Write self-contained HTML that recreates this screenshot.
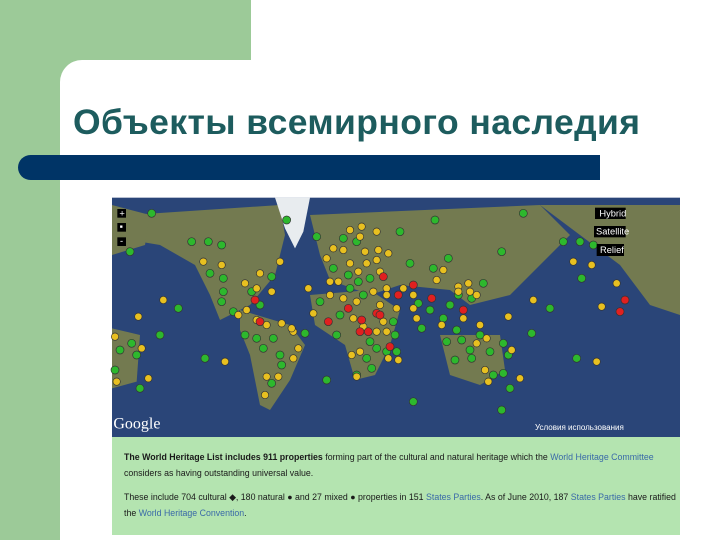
<!DOCTYPE html><html><head><meta charset="utf-8"><style>
body{margin:0;width:720px;height:540px;position:relative;overflow:hidden;background:#fff;font-family:"Liberation Sans",sans-serif}
.g1{position:absolute;left:0;top:0;width:251px;height:60px;background:#9cca98}
.g3{position:absolute;left:0;top:0;width:100px;height:100px;background:#9cca98}
.g2{position:absolute;left:0;top:0;width:60px;height:540px;background:#9cca98}
.w{position:absolute;left:60px;top:60px;width:700px;height:500px;background:#fff;border-top-left-radius:22px}
h1{position:absolute;left:73px;top:102px;margin:0;font-size:35.5px;font-weight:bold;color:#1d5c5e;white-space:nowrap;letter-spacing:0.4px}
.bar{position:absolute;left:18px;top:155px;width:582px;height:25px;background:#003466;border-radius:13px 0 0 13px}
.map{position:absolute;left:110px;top:195px}
.panel{position:absolute;left:112px;top:437px;width:568px;height:98px;background:#b4e4b0;font-size:8.8px;color:#1a1a1a;line-height:16px}
.panel p{margin:0;position:absolute;left:12px;width:552px}
.panel a{color:#3a6aa8}
</style></head><body>
<div class="g1"></div><div class="g3"></div><div class="g2"></div><div class="w"></div>
<h1>Объекты всемирного наследия</h1>
<div class="bar"></div>
<svg class="map" width="575" height="245" viewBox="0 0 1725 735">
<rect x="6" y="8" width="1704" height="718" fill="#2a4578"/>
<g fill="#737a50">
<polygon points="60,60 510,30 525,120 495,240 420,330 330,375 300,300 255,210 150,150 60,135"/>
<polygon points="390,345 540,390 585,450 540,555 480,645 450,630 420,480 390,405"/>
<polygon points="600,60 1290,30 1380,120 1290,210 1200,300 1080,330 1020,285 870,270 780,300 660,255 630,180"/>
<polygon points="600,300 780,285 870,345 840,450 795,540 735,555 705,450 615,390"/>
<polygon points="990,420 1170,420 1185,525 1110,570 1020,540"/>
<polygon points="1290,30 1710,30 1710,360 1620,330 1530,210 1410,120"/>
<polygon points="6,30 120,60 105,150 6,180"/>
<polygon points="6,400 90,420 80,560 6,580"/>
</g>
<polygon points="495,8 600,8 580,110 555,160 525,100" fill="#e8ecef"/>
<g stroke="#333" stroke-width="2">
<g fill="#2db82d">
<circle cx="125" cy="55" r="12"/><circle cx="530" cy="75" r="12"/><circle cx="620" cy="125" r="12"/><circle cx="975" cy="75" r="12"/><circle cx="870" cy="110" r="12"/><circle cx="1240" cy="55" r="12"/><circle cx="60" cy="170" r="12"/><circle cx="245" cy="140" r="12"/><circle cx="295" cy="140" r="12"/><circle cx="335" cy="150" r="12"/><circle cx="300" cy="235" r="12"/><circle cx="340" cy="250" r="12"/><circle cx="340" cy="290" r="12"/><circle cx="335" cy="320" r="12"/><circle cx="370" cy="350" r="12"/><circle cx="485" cy="245" r="12"/><circle cx="425" cy="290" r="12"/><circle cx="450" cy="330" r="12"/><circle cx="405" cy="420" r="12"/><circle cx="440" cy="430" r="12"/><circle cx="490" cy="430" r="12"/><circle cx="460" cy="460" r="12"/><circle cx="510" cy="480" r="12"/><circle cx="515" cy="510" r="12"/><circle cx="485" cy="565" r="12"/><circle cx="585" cy="415" r="12"/><circle cx="650" cy="555" r="12"/><circle cx="630" cy="320" r="12"/><circle cx="680" cy="420" r="12"/><circle cx="700" cy="130" r="12"/><circle cx="740" cy="140" r="12"/><circle cx="670" cy="220" r="12"/><circle cx="715" cy="240" r="12"/><circle cx="745" cy="260" r="12"/><circle cx="780" cy="250" r="12"/><circle cx="720" cy="280" r="12"/><circle cx="690" cy="360" r="12"/><circle cx="760" cy="300" r="12"/><circle cx="780" cy="440" r="12"/><circle cx="800" cy="460" r="12"/><circle cx="855" cy="420" r="12"/><circle cx="850" cy="380" r="12"/><circle cx="900" cy="205" r="12"/><circle cx="970" cy="220" r="12"/><circle cx="1015" cy="190" r="12"/><circle cx="1175" cy="170" r="12"/><circle cx="1120" cy="265" r="12"/><circle cx="1085" cy="310" r="12"/><circle cx="1045" cy="300" r="12"/><circle cx="1020" cy="330" r="12"/><circle cx="925" cy="325" r="12"/><circle cx="935" cy="400" r="12"/><circle cx="960" cy="345" r="12"/><circle cx="1000" cy="370" r="12"/><circle cx="1040" cy="405" r="12"/><circle cx="1010" cy="440" r="12"/><circle cx="1055" cy="435" r="12"/><circle cx="1080" cy="465" r="12"/><circle cx="1110" cy="420" r="12"/><circle cx="1140" cy="470" r="12"/><circle cx="1180" cy="445" r="12"/><circle cx="1195" cy="480" r="12"/><circle cx="1035" cy="495" r="12"/><circle cx="1085" cy="490" r="12"/><circle cx="1150" cy="540" r="12"/><circle cx="1180" cy="535" r="12"/><circle cx="1200" cy="580" r="12"/><circle cx="1175" cy="645" r="12"/><circle cx="1265" cy="415" r="12"/><circle cx="1320" cy="340" r="12"/><circle cx="1400" cy="490" r="12"/><circle cx="1415" cy="250" r="12"/><circle cx="1360" cy="140" r="12"/><circle cx="1410" cy="140" r="12"/><circle cx="1450" cy="150" r="12"/><circle cx="910" cy="620" r="12"/><circle cx="285" cy="490" r="12"/><circle cx="205" cy="340" r="12"/><circle cx="150" cy="420" r="12"/><circle cx="65" cy="445" r="12"/><circle cx="80" cy="480" r="12"/><circle cx="30" cy="465" r="12"/><circle cx="90" cy="580" r="12"/><circle cx="15" cy="525" r="12"/><circle cx="740" cy="540" r="12"/><circle cx="785" cy="520" r="12"/><circle cx="770" cy="490" r="12"/><circle cx="860" cy="470" r="12"/><circle cx="830" cy="470" r="12"/>
</g>
<g fill="#e8c020">
<circle cx="280" cy="200" r="11"/><circle cx="335" cy="210" r="11"/><circle cx="510" cy="200" r="11"/><circle cx="450" cy="235" r="11"/><circle cx="405" cy="265" r="11"/><circle cx="440" cy="280" r="11"/><circle cx="485" cy="290" r="11"/><circle cx="595" cy="280" r="11"/><circle cx="160" cy="315" r="11"/><circle cx="85" cy="365" r="11"/><circle cx="15" cy="425" r="11"/><circle cx="95" cy="460" r="11"/><circle cx="20" cy="560" r="11"/><circle cx="115" cy="550" r="11"/><circle cx="345" cy="500" r="11"/><circle cx="470" cy="545" r="11"/><circle cx="505" cy="545" r="11"/><circle cx="465" cy="600" r="11"/><circle cx="550" cy="490" r="11"/><circle cx="565" cy="460" r="11"/><circle cx="550" cy="410" r="11"/><circle cx="515" cy="385" r="11"/><circle cx="470" cy="390" r="11"/><circle cx="440" cy="375" r="11"/><circle cx="410" cy="345" r="11"/><circle cx="385" cy="360" r="11"/><circle cx="610" cy="355" r="11"/><circle cx="720" cy="105" r="11"/><circle cx="755" cy="95" r="11"/><circle cx="800" cy="110" r="11"/><circle cx="750" cy="125" r="11"/><circle cx="670" cy="160" r="11"/><circle cx="700" cy="165" r="11"/><circle cx="765" cy="170" r="11"/><circle cx="805" cy="165" r="11"/><circle cx="835" cy="175" r="11"/><circle cx="650" cy="190" r="11"/><circle cx="720" cy="205" r="11"/><circle cx="770" cy="205" r="11"/><circle cx="685" cy="260" r="11"/><circle cx="660" cy="260" r="11"/><circle cx="800" cy="195" r="11"/><circle cx="745" cy="230" r="11"/><circle cx="810" cy="230" r="11"/><circle cx="830" cy="280" r="11"/><circle cx="790" cy="290" r="11"/><circle cx="660" cy="300" r="11"/><circle cx="700" cy="310" r="11"/><circle cx="740" cy="320" r="11"/><circle cx="810" cy="330" r="11"/><circle cx="830" cy="300" r="11"/><circle cx="860" cy="340" r="11"/><circle cx="730" cy="370" r="11"/><circle cx="760" cy="395" r="11"/><circle cx="820" cy="380" r="11"/><circle cx="830" cy="410" r="11"/><circle cx="800" cy="410" r="11"/><circle cx="725" cy="480" r="11"/><circle cx="750" cy="470" r="11"/><circle cx="835" cy="490" r="11"/><circle cx="865" cy="495" r="11"/><circle cx="740" cy="545" r="11"/><circle cx="880" cy="280" r="11"/><circle cx="910" cy="300" r="11"/><circle cx="910" cy="340" r="11"/><circle cx="920" cy="370" r="11"/><circle cx="980" cy="255" r="11"/><circle cx="1000" cy="225" r="11"/><circle cx="1045" cy="275" r="11"/><circle cx="1075" cy="265" r="11"/><circle cx="1080" cy="290" r="11"/><circle cx="1100" cy="300" r="11"/><circle cx="1045" cy="290" r="11"/><circle cx="1060" cy="370" r="11"/><circle cx="995" cy="390" r="11"/><circle cx="1110" cy="390" r="11"/><circle cx="1130" cy="430" r="11"/><circle cx="1100" cy="445" r="11"/><circle cx="1125" cy="525" r="11"/><circle cx="1135" cy="560" r="11"/><circle cx="1205" cy="465" r="11"/><circle cx="1230" cy="550" r="11"/><circle cx="1195" cy="365" r="11"/><circle cx="1270" cy="315" r="11"/><circle cx="1390" cy="200" r="11"/><circle cx="1445" cy="210" r="11"/><circle cx="1520" cy="265" r="11"/><circle cx="1475" cy="335" r="11"/><circle cx="1460" cy="500" r="11"/><circle cx="545" cy="400" r="11"/>
</g>
<g fill="#e02020">
<circle cx="435" cy="315" r="12"/><circle cx="450" cy="380" r="12"/><circle cx="820" cy="245" r="12"/><circle cx="865" cy="300" r="12"/><circle cx="910" cy="270" r="12"/><circle cx="965" cy="310" r="12"/><circle cx="715" cy="340" r="12"/><circle cx="800" cy="355" r="12"/><circle cx="655" cy="380" r="12"/><circle cx="755" cy="375" r="12"/><circle cx="750" cy="410" r="12"/><circle cx="775" cy="410" r="12"/><circle cx="810" cy="360" r="12"/><circle cx="840" cy="455" r="12"/><circle cx="1060" cy="345" r="12"/><circle cx="1530" cy="350" r="12"/><circle cx="1545" cy="315" r="12"/>
</g>
</g>
<g fill="#000"><rect x="22" y="42" width="26" height="26"/><rect x="22" y="84" width="26" height="26"/><rect x="22" y="127" width="26" height="26"/>
<rect x="1455" y="38" width="92" height="34"/><rect x="1452" y="93" width="95" height="34"/><rect x="1460" y="147" width="82" height="36"/></g>
<g fill="#fff" font-size="28" font-family="Liberation Sans">
<text x="28" y="64">+</text><text x="29" y="104">▪</text><text x="30" y="147">-</text>
<text x="1468" y="64">Hybrid</text><text x="1458" y="119">Satellite</text><text x="1470" y="174">Relief</text>
<text x="10" y="700" font-size="48" font-family="Liberation Serif">Google</text>
<text x="1275" y="705" font-size="24">Условия использования</text>
</g>
</svg>
<div class="panel">
<p style="top:12px"><b>The World Heritage List includes 911 properties</b> forming part of the cultural and natural heritage which the <a>World Heritage Committee</a> considers as having outstanding universal value.</p>
<p style="top:52px">These include 704 cultural ◆, 180 natural ● and 27 mixed ● properties in 151 <a>States Parties</a>. As of June 2010, 187 <a>States Parties</a> have ratified the <a>World Heritage Convention</a>.</p>
</div>
</body></html>
